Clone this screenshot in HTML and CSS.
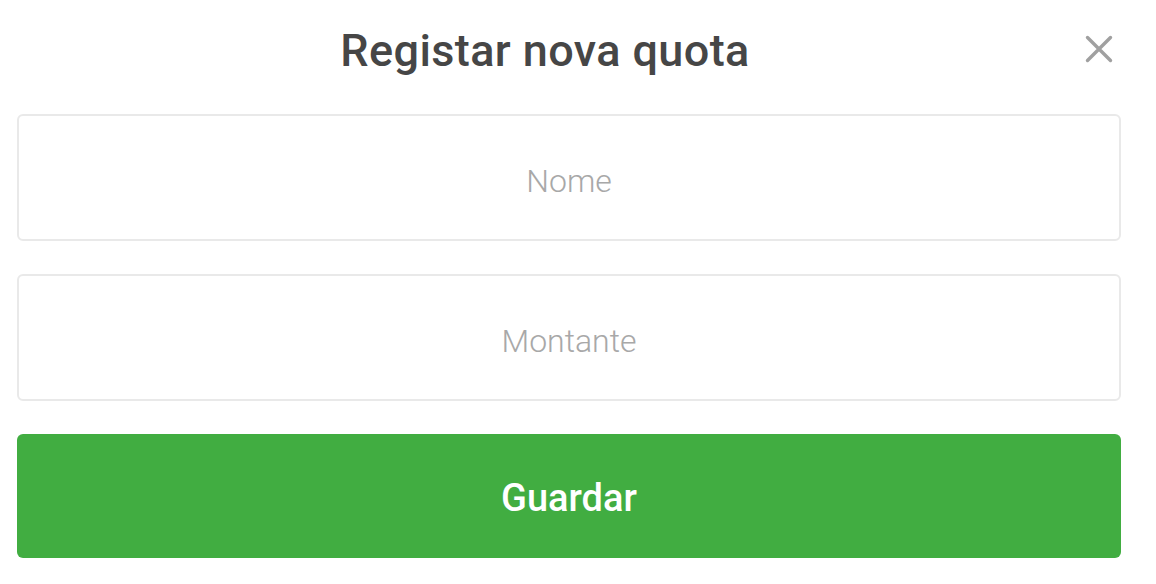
FILE: index.html
```html
<!DOCTYPE html>
<html lang="pt">
<head>
<meta charset="UTF-8">
<meta name="viewport" content="width=device-width, initial-scale=1.0">
<title>Registar nova quota</title>
<link rel="stylesheet" href="styles.css">
</head>
<body>
    <div class="modal">
        <div class="modal-header">
            <h1 class="modal-title">Registar nova quota</h1>
            <button class="close-btn" type="button" aria-label="Fechar">
                <svg width="28" height="28" viewBox="0 0 28 28">
                    <path d="M2.5 2.5 L25.5 25.5 M25.5 2.5 L2.5 25.5" stroke="#a0a0a0" stroke-width="3.4" stroke-linecap="round"/>
                </svg>
            </button>
        </div>

        <form class="quota-form">
            <input class="field" type="text" placeholder="Nome">
            <input class="field" type="text" placeholder="Montante">
            <button class="save-btn" type="submit">Guardar</button>
        </form>
    </div>
</body>
</html>
```

FILE: styles.css
```css
body {
    margin: 0;
    padding: 0;
    background: #fff;
    font-family: Roboto, "Noto Sans", sans-serif;
}

.modal {
    padding: 0 35px 0 17px;
}

.modal-header {
    display: flex;
    align-items: center;
    height: 98px;
    margin-bottom: 16px;
}

.modal-title {
    flex: 1;
    margin: 0;
    padding-top: 2px;
    text-align: center;
    font-size: 45px;
    font-weight: 500;
    color: #464646;
    letter-spacing: 0.4px;
}

.close-btn {
    width: 48px;
    height: 48px;
    padding: 0 0 0 3px;
    border: none;
    background: none;
    display: flex;
    align-items: center;
    justify-content: center;
    cursor: pointer;
}

.quota-form {
    display: flex;
    flex-direction: column;
    gap: 33px;
}

.field {
    height: 127px;
    padding: 6px 0 0;
    border: 2px solid #e9e9e9;
    border-radius: 6px;
    box-sizing: border-box;
    text-align: center;
    font-family: Roboto, "Noto Sans", sans-serif;
    font-size: 32px;
    font-weight: 300;
    color: #444;
    outline: none;
}

.field::placeholder {
    color: #a8a8a8;
}

.save-btn {
    height: 124px;
    padding-top: 4px;
    border: none;
    border-radius: 6px;
    background-color: #41ad41;
    color: #fff;
    font-family: Roboto, "Noto Sans", sans-serif;
    font-size: 38px;
    font-weight: 500;
    cursor: pointer;
}
```
